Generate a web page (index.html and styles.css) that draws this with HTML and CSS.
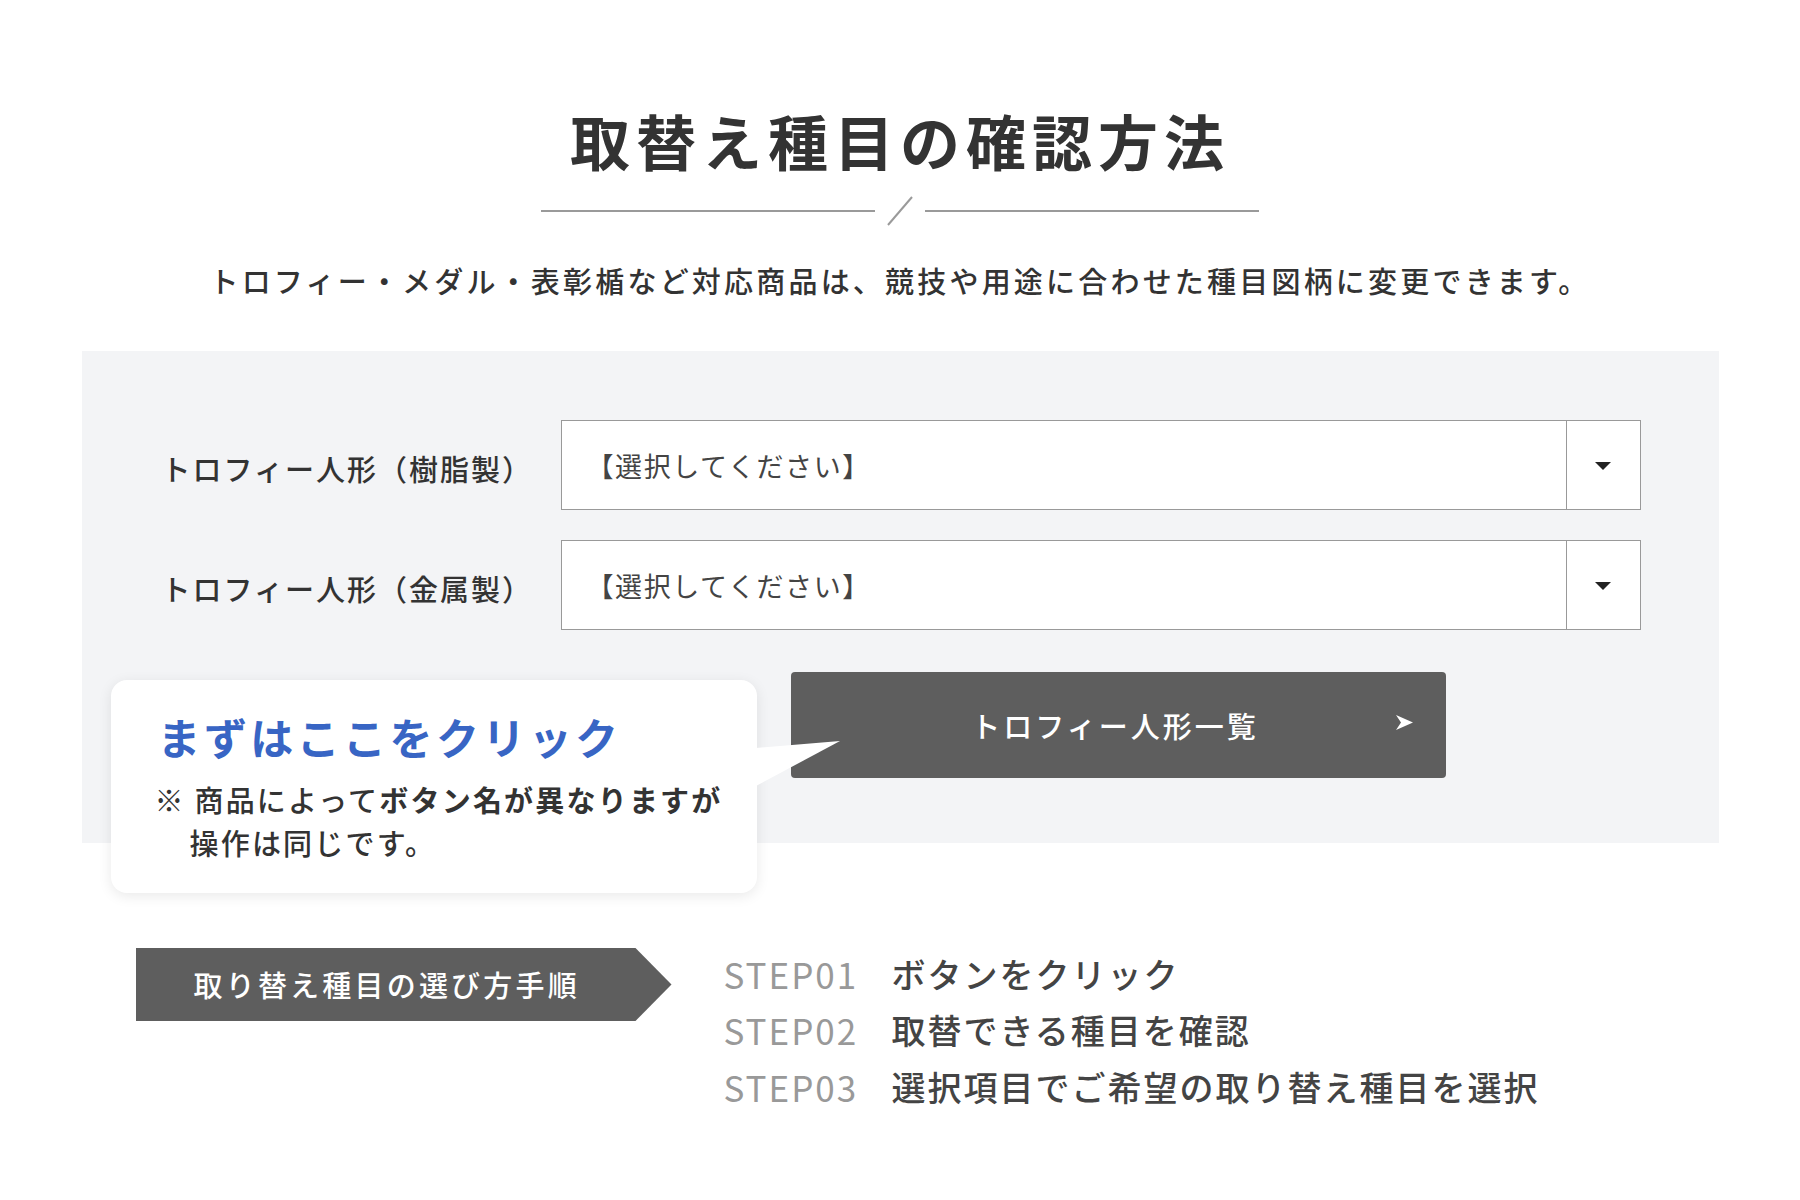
FILE: index.html
```html
<!DOCTYPE html>
<html lang="ja">
<head>
<meta charset="utf-8">
<meta name="viewport" content="width=device-width, initial-scale=1">
<link rel="stylesheet" href="styles.css">
</head>
<body>
<section class="howto">
	<h1 class="howto-title">取替え種目の確認方法</h1>
	<div class="divider">
		<span class="divider-line"></span>
		<svg class="divider-slash" width="26" height="30" viewBox="0 0 26 30"><line x1="1" y1="29" x2="25" y2="1" stroke="#9a9a9a" stroke-width="2"/></svg>
		<span class="divider-line"></span>
	</div>
	<p class="lead">トロフィー・メダル・表彰楯など対応商品は、競技や用途に合わせた種目図柄に変更できます。</p>

	<div class="panel">
		<div class="field-row">
			<span class="field-label">トロフィー人形（樹脂製）</span>
			<div class="select">
				<span class="select-value">【選択してください】</span>
				<span class="select-arrow"><i></i></span>
			</div>
		</div>
		<div class="field-row">
			<span class="field-label">トロフィー人形（金属製）</span>
			<div class="select">
				<span class="select-value">【選択してください】</span>
				<span class="select-arrow"><i></i></span>
			</div>
		</div>
		<div class="button-row">
			<a class="list-button" href="#">トロフィー人形一覧
				<svg class="list-button-icon" width="17" height="15" viewBox="0 0 17 15"><polygon points="0,0 17,7.5 0,15 5,7.5" fill="#fff"/></svg>
			</a>
		</div>

		<div class="callout">
			<p class="callout-title">まずはここをクリック</p>
			<p class="callout-note">※ 商品によって<b>ボタン名が異なりますが</b><br>操作は同じです。</p>
			<svg class="callout-tail" width="84" height="46" viewBox="0 0 84 46"><polygon points="0,7 84,0 0,45" fill="#fff"/></svg>
		</div>
	</div>

	<div class="steps">
		<div class="steps-tag">取り替え種目の選び方手順</div>
		<ol class="steps-list">
			<li><span class="step-no">STEP01</span>ボタンをクリック</li>
			<li><span class="step-no">STEP02</span>取替できる種目を確認</li>
			<li><span class="step-no">STEP03</span>選択項目でご希望の取り替え種目を選択</li>
		</ol>
	</div>
</section>
</body>
</html>
```

FILE: styles.css
```css
* { margin: 0; padding: 0; box-sizing: border-box }

body {
	background: #fff;
	color: #333;
	font-family: "Noto Sans CJK JP", "Noto Sans", sans-serif;
}

.howto { padding: 100px 0 80px }

.howto-title {
	font-size: 60px;
	line-height: 80px;
	font-weight: 700;
	letter-spacing: 6px;
	text-align: center;
	color: #333;
}

.divider {
	display: flex;
	align-items: center;
	justify-content: center;
	margin-top: 16px;
	height: 30px;
}

.divider-line {
	width: 334px;
	height: 2px;
	background: #9a9a9a;
}

.divider-slash { margin: 0 12px }

.lead {
	margin-top: 34px;
	font-size: 29px;
	line-height: 40px;
	font-weight: 500;
	letter-spacing: 3.2px;
	text-align: center;
}

/* grey form panel */
.panel {
	position: relative;
	width: 1637px;
	margin: 51px auto 0;
	padding: 69px 78px 65px 80px;
	background: #f3f4f6;
}

.field-row {
	display: flex;
	align-items: center;
}
.field-row + .field-row { margin-top: 30px }

.field-label {
	width: 399px;
	flex-shrink: 0;
	font-size: 29px;
	font-weight: 500;
	letter-spacing: 2px;
	padding-top: 6px;
}

.select {
	display: flex;
	flex: 1;
	height: 90px;
	background: #fff;
	border: 1px solid #999;
}

.select-value {
	flex: 1;
	display: flex;
	align-items: center;
	padding-left: 25px;
	font-size: 27px;
	letter-spacing: 1.6px;
	color: #444;
}

.select-arrow {
	width: 74px;
	border-left: 1px solid #999;
	display: flex;
	align-items: center;
	justify-content: center;
}
.select-arrow i {
	width: 0;
	height: 0;
	margin-top: 2px;
	border-left: 8px solid transparent;
	border-right: 8px solid transparent;
	border-top: 8px solid #222;
}

.button-row {
	margin-top: 42px;
	padding-left: 629px;
}

.list-button {
	position: relative;
	display: flex;
	align-items: center;
	justify-content: center;
	width: 655px;
	height: 106px;
	background: #5e5e5e;
	border-radius: 4px;
	color: #fff;
	text-decoration: none;
	font-size: 29px;
	font-weight: 500;
	letter-spacing: 3px;
	padding-right: 6px;
}

.list-button-icon {
	position: absolute;
	right: 33px;
	top: 43px;
}

/* speech bubble over the panel */
.callout {
	position: absolute;
	left: 29px;
	top: 329px;
	width: 646px;
	height: 213px;
	padding: 26px 0 0 44px;
	background: #fff;
	border-radius: 16px;
	box-shadow: 0 3px 14px rgba(0, 0, 0, .09);
}

.callout-title {
	font-size: 43px;
	line-height: 60px;
	font-weight: 700;
	letter-spacing: 3.4px;
	color: #3865c4;
	padding-left: 3px;
}

.callout-note {
	margin-top: 12px;
	padding-left: 35px;
	text-indent: -35px;
	font-size: 29px;
	line-height: 43px;
	font-weight: 500;
	letter-spacing: 2.2px;
	color: #333;
}
.callout-note b { font-weight: 700 }

.callout-tail {
	position: absolute;
	left: 645px;
	top: 61px;
}

/* steps */
.steps {
	display: flex;
	align-items: flex-start;
	width: 1637px;
	margin: 105px auto 0;
	padding-left: 54px;
}

.steps-tag {
	width: 536px;
	height: 73px;
	padding-left: 58px;
	line-height: 73px;
	background: #5e5e5e;
	color: #fff;
	font-size: 29px;
	font-weight: 500;
	letter-spacing: 3.2px;
	clip-path: polygon(0 0, calc(100% - 36px) 0, 100% 50%, calc(100% - 36px) 100%, 0 100%);
}

.steps-list {
	list-style: none;
	margin: -3px 0 0 52px;
}

.steps-list li {
	display: flex;
	align-items: center;
	height: 56.5px;
	font-size: 34px;
	letter-spacing: 2px;
	color: #444;
	font-weight: 500;
}

.step-no {
	width: 168px;
	font-size: 35px;
	letter-spacing: 2px;
	color: #999;
	font-weight: 400;
}
```
